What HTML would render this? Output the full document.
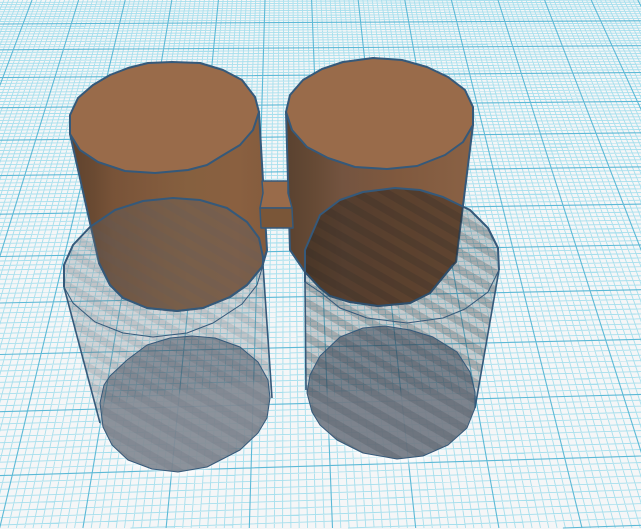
<!DOCTYPE html>
<html>
<head>
<meta charset="utf-8">
<style>
html,body{margin:0;padding:0;background:#f5f6f7;width:641px;height:529px;overflow:hidden;}
svg{display:block;overflow:hidden;}
</style>
</head>
<body>
<svg id="s" xmlns="http://www.w3.org/2000/svg" width="641" height="529" viewBox="0 0 641 529">
<defs>
<linearGradient id="bl" gradientUnits="userSpaceOnUse" x1="70" y1="0" x2="267" y2="0">
<stop offset="0" stop-color="#5f432e"/><stop offset=".12" stop-color="#6a4a32"/><stop offset=".22" stop-color="#785338"/><stop offset=".4" stop-color="#80593c"/><stop offset=".6" stop-color="#86603f"/><stop offset=".85" stop-color="#8a6040"/><stop offset="1" stop-color="#845c3e"/>
</linearGradient>
<linearGradient id="br" gradientUnits="userSpaceOnUse" x1="287" y1="0" x2="473" y2="0">
<stop offset="0" stop-color="#5a4230"/><stop offset=".15" stop-color="#664a35"/><stop offset=".3" stop-color="#745440"/><stop offset=".6" stop-color="#80593e"/><stop offset="1" stop-color="#8a6245"/>
</linearGradient>
<pattern id="hl" patternUnits="userSpaceOnUse" width="15" height="15" patternTransform="rotate(30)">
<rect width="15" height="15" fill="#70757d" fill-opacity=".27"/>
<rect y="0" width="15" height="7.5" fill="#60656d" fill-opacity=".14"/>
</pattern>
<pattern id="hr" patternUnits="userSpaceOnUse" width="15" height="15" patternTransform="rotate(30)">
<rect width="15" height="15" fill="#3a3d42" fill-opacity=".24"/>
<rect y="0" width="15" height="7.5" fill="#2a2d32" fill-opacity=".2"/>
</pattern>
<clipPath id="cl"><polygon points="70,134 99,263 110,285 123,298 147,308 177,311 203,308 230,297 247,285 262,267 267,250 259,112"/></clipPath>
<clipPath id="cr"><polygon points="286,112 290,250 305,272 320,288 330,296 350,302 378,306 410,303 430,293 453,265 456,262 473,125"/></clipPath>
<filter id="blur" x="-20%" y="-20%" width="140%" height="140%"><feGaussianBlur stdDeviation="3"/></filter>
</defs>
<g id="grid"></g>

<!-- soft base glow -->
<polygon filter="url(#blur)" fill="#ffffff" fill-opacity=".8" points="100,403 268,380 270,398 258,433 207,470 178,476 128,464 103,430"/>
<polygon filter="url(#blur)" fill="#ffffff" fill-opacity=".8" points="307,393 475,392 467,430 423,460 397,463 363,457 320,428"/>

<!-- left cylinder body -->
<polygon fill="url(#bl)" stroke="#35597a" stroke-width="2" stroke-linejoin="round" points="70,134 99,263 110,285 123,298 147,308 177,311 203,308 230,297 247,285 262,267 267,250 259,112"/>
<!-- right cylinder body -->
<polygon fill="url(#br)" stroke="#35597a" stroke-width="2" stroke-linejoin="round" points="286,112 290,250 305,272 320,288 330,296 350,302 378,306 410,303 430,293 453,265 456,262 473,125"/>

<!-- connector -->
<polygon fill="#996b4a" stroke="#35597a" stroke-width="1.5" stroke-linejoin="round" points="262,181 288,181 288,193 292,208 260,208 263,193"/>
<polygon fill="#7a5638" stroke="#35597a" stroke-width="1.5" stroke-linejoin="round" points="260,208 292,208 293,228 261,228"/>

<!-- left top face -->
<polygon fill="#996b4a" stroke="#35597a" stroke-width="2" stroke-linejoin="round" points="70,115 78,98 93,85 110,75 128,68 148,63 172,62 200,63 223,70 242,80 255,97 259,112 253,130 240,145 220,157 207,165 188,170 155,173 125,171 98,162 80,150 70,134"/>
<!-- right top face -->
<polygon fill="#996b4a" stroke="#35597a" stroke-width="2" stroke-linejoin="round" points="286,112 290,95 303,80 322,69 343,62 373,58 402,60 427,67 448,77 465,90 473,107 473,125 463,142 445,155 417,166 387,169 355,167 328,158 307,147 292,130"/>

<!-- left ghost -->
<polygon fill="url(#hl)" points="64,287 64,265 73,245 90,227 115,210 143,201 173,198 200,200 227,208 247,222 259,238 263,257 263,265 272,398 270,398 267,418 258,433 240,450 207,467 178,472 152,469 128,460 112,445 103,427 100,423"/>
<g clip-path="url(#cl)"><polygon fill="#1a0e06" fill-opacity=".07" points="64,287 64,265 73,245 90,227 115,210 143,201 173,198 200,200 227,208 247,222 259,238 263,257 263,320 64,320"/></g>
<polygon fill="#3a4656" fill-opacity=".48" stroke="#35597a" stroke-width="1" stroke-linejoin="round" points="100,403 104,385 110,376 127,360 147,345 170,338 192,336 215,338 240,347 258,362 268,380 270,398 267,418 258,433 240,450 207,467 178,472 152,469 128,460 112,445 103,427"/>
<polyline fill="none" stroke="#35597a" stroke-width="1" points="64,287 73,303 95,322 123,333 153,337 187,333 213,323 242,304 257,285 263,265"/>
<polyline fill="none" stroke="#35597a" stroke-width="2" stroke-linejoin="round" points="64,287 64,265 73,245 90,227 115,210 143,201 173,198 200,200 227,208 247,222 259,238 263,257 263,265"/>
<line x1="64" y1="287" x2="100" y2="423" stroke="#35597a" stroke-width="1.6"/>
<line x1="263" y1="265" x2="272" y2="398" stroke="#35597a" stroke-width="1.6"/>

<!-- right ghost -->
<polygon fill="url(#hr)" points="305,282 305,250 320,215 340,200 363,192 395,188 420,190 443,197 470,210 488,228 498,248 499,270 475,408 467,428 448,445 423,456 397,459 363,453 337,440 320,425 312,412 307,393 306,390"/>
<g clip-path="url(#cr)"><polygon fill="#2a1608" fill-opacity=".3" points="305,320 305,250 320,215 340,200 363,192 395,188 420,190 443,197 470,210 488,228 498,248 499,320"/></g>
<polygon fill="#3a4656" fill-opacity=".55" stroke="#35597a" stroke-width="1" stroke-linejoin="round" points="307,393 310,375 320,356 340,337 363,328 385,326 410,330 433,337 457,352 470,372 475,392 475,408 467,428 448,445 423,456 397,459 363,453 337,440 320,425 312,412"/>
<polyline fill="none" stroke="#35597a" stroke-width="1" points="305,282 320,292 340,308 367,318 407,323 443,318 465,309 488,292 499,270"/>
<polyline fill="none" stroke="#35597a" stroke-width="2" stroke-linejoin="round" points="305,282 305,250 320,215 340,200 363,192 395,188 420,190 443,197 470,210 488,228 498,248 499,270"/>
<line x1="305" y1="282" x2="306" y2="390" stroke="#35597a" stroke-width="1.6"/>
<line x1="499" y1="270" x2="475" y2="408" stroke="#35597a" stroke-width="1.6"/>

<!-- re-stroke brown bottom arcs through the ghost -->
<polyline fill="none" stroke="#35597a" stroke-width="2" stroke-linejoin="round" points="99,263 110,285 123,298 147,308 177,311 203,308 230,297 247,285 262,267 267,250"/>
<polyline fill="none" stroke="#2f4f6c" stroke-width="2" stroke-linejoin="round" points="305,272 320,288 330,296 350,302 378,306 410,303 430,293 453,265"/>
</svg>
<script>
(function(){
  var NS="http://www.w3.org/2000/svg",g=document.getElementById("grid"),minor="",major="";
  function X(x0,y){return 285+(x0-285)*(1+y*0.001487);}
  for(var i=-60;i<=85;i++){
    var x0=265+4.66*i,d="M"+x0.toFixed(1)+" 0L"+X(x0,528).toFixed(1)+" 528";
    if(i%10===0){major+=d;}else{minor+=d;}
  }
  for(var k=-9;k<=125;k++){
    var n=k/10,y0=1/(0.0014368-0.0000514*n)-672,s=(y0+64)/17640,yR=y0-641*s;
    if(yR>=528){continue;}
    var xL=0,yL=y0;
    if(y0>528){xL=(y0-528)/s;yL=528;}
    var e="M"+xL.toFixed(1)+" "+yL.toFixed(1)+"L641 "+yR.toFixed(1);
    if(k%10===0){major+=e;}else{minor+=e;}
  }
  function add(d,c,w){var p=document.createElementNS(NS,"path");p.setAttribute("d",d);p.setAttribute("stroke",c);p.setAttribute("stroke-width",w);p.setAttribute("fill","none");g.appendChild(p);}
  add(minor,"#a6dfed","0.9");
  add(major,"#5cb9d6","1.1");
})();
</script>
</body>
</html>
